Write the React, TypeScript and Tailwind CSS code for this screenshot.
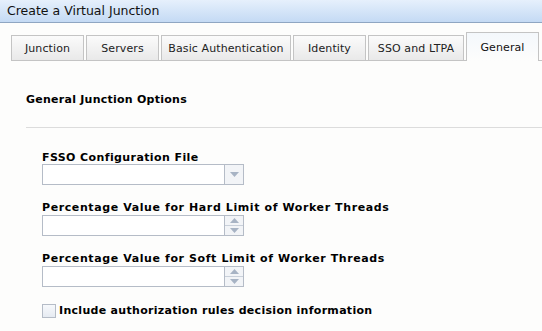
import React from "react";

const tabs = [
  { label: "Junction", w: 73 },
  { label: "Servers", w: 73 },
  { label: "Basic Authentication", w: 130 },
  { label: "Identity", w: 73 },
  { label: "SSO and LTPA", w: 96 },
];

function Spinner() {
  return (
    <div className="flex h-[21px] w-[202px] border border-[#b5bcc7] bg-white">
      <div className="flex-1" />
      <div className="flex w-[19px] flex-col border-l border-[#b5bcc7] bg-[#f2f4f7]">
        <div className="flex flex-1 items-center justify-center border-b border-[#c9d0da]">
          <svg width="9" height="5" viewBox="0 0 9 5"><path d="M0 5 L4.5 0 L9 5 Z" fill="#a7b3c4" /></svg>
        </div>
        <div className="flex flex-1 items-center justify-center">
          <svg width="9" height="5" viewBox="0 0 9 5"><path d="M0 0 L4.5 5 L9 0 Z" fill="#a7b3c4" /></svg>
        </div>
      </div>
    </div>
  );
}

export default function App() {
  const font = { fontFamily: '"DejaVu Sans", Verdana, sans-serif' };
  return (
    <div className="h-[331px] w-[542px] overflow-hidden bg-[#fdfdfc] text-black" style={font}>
      <div className="flex h-[23px] items-center border-b border-[#8fa6c2] bg-gradient-to-b from-[#e6f0fc] to-[#c4daf4] pl-[7px] text-[12.5px] text-[#111]">
        Create a Virtual Junction
      </div>
      <div className="flex h-[38px] items-end pl-[11px]">
        <div className="flex flex-1 items-end gap-[2px] border-b border-[#c4c4c4]">
          {tabs.map((t) => (
            <div
              key={t.label}
              className="-mb-px flex h-[26px] items-center justify-center border border-[#c4c4c4] bg-gradient-to-b from-[#fbfbfb] to-[#e9e9e9] pt-[2px] text-[11px] tracking-[0.1px] text-[#222]"
              style={{ width: t.w }}
            >
              {t.label}
            </div>
          ))}
          <div className="-mb-px flex h-[29px] w-[73px] items-center justify-center border border-b-0 border-[#c4c4c4] bg-gradient-to-b from-[#f4f8fc] to-[#fdfdfc] pt-[2px] text-[11px] tracking-[0.1px] text-[#111]">
            General
          </div>
          <div className="w-[5px]" />
        </div>
      </div>
      <div className="pl-[26px] pt-[31px] text-[11px] font-bold tracking-[0.25px]">General Junction Options</div>
      <div className="ml-[26px] mt-[18px] h-px bg-[#dcdcdc]" />
      <div className="flex flex-col pl-[42px] pt-[23px] text-[11px] font-bold">
        <div className="leading-[13px] tracking-[0.4px]">FSSO Configuration File</div>
        <div className="flex h-[21px] w-[202px] border border-[#b5bcc7] bg-white">
          <div className="flex-1" />
          <div className="flex w-[19px] items-center justify-center border-l border-[#b5bcc7] bg-[#f2f4f7]">
            <svg width="9" height="5" viewBox="0 0 9 5"><path d="M0 0 L4.5 5 L9 0 Z" fill="#a7b3c4" /></svg>
          </div>
        </div>
        <div className="mt-[16px] leading-[13px] tracking-[0.6px]">Percentage Value for Hard Limit of Worker Threads</div>
        <div className="mt-[1px]"><Spinner /></div>
        <div className="mt-[16px] leading-[13px] tracking-[0.6px]">Percentage Value for Soft Limit of Worker Threads</div>
        <div className="mt-[1px]"><Spinner /></div>
        <div className="mt-[16px] flex items-center gap-[3px]">
          <div className="h-[14px] w-[14px] border border-[#b5bcc7] bg-gradient-to-b from-[#f7f9fc] to-[#e6ebf2]" />
          <span className="tracking-[0.3px]">Include authorization rules decision information</span>
        </div>
      </div>
    </div>
  );
}
